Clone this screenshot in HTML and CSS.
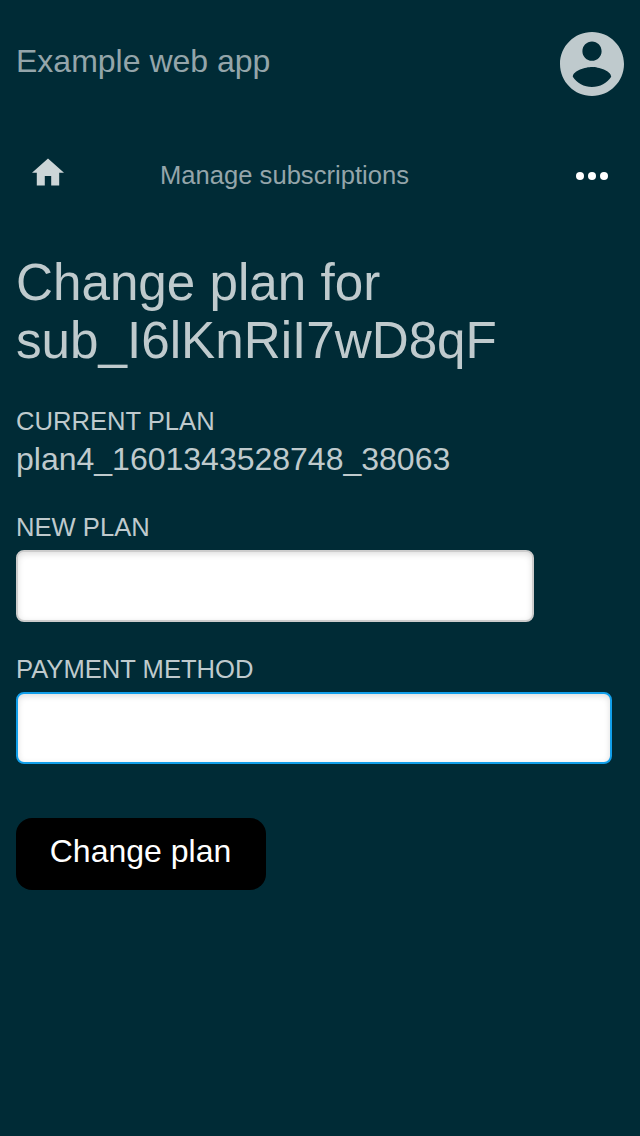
FILE: index.html
```html
<!DOCTYPE html>
<html lang="en">
<head>
<meta charset="utf-8">
<title>Change plan</title>
<link rel="stylesheet" href="styles.css">
</head>
<body>
<header class="header">
  <div class="app-name">Example web app</div>
  <svg class="account" viewBox="2 2 20 20"><path fill="currentColor" d="M12 2C6.48 2 2 6.48 2 12s4.48 10 10 10 10-4.48 10-10S17.52 2 12 2zm0 3c1.66 0 3 1.34 3 3s-1.34 3-3 3-3-1.34-3-3 1.34-3 3-3zm0 14.2c-2.5 0-4.71-1.28-6-3.22.03-1.99 4-3.08 6-3.08 1.99 0 5.97 1.09 6 3.08-1.29 1.94-3.5 3.22-6 3.22z"/></svg>
</header>
<nav class="nav">
  <svg class="home" viewBox="2 2.75 20 17.5"><path fill="currentColor" d="M10 20v-6h4v6h5v-8h3L12 3 2 12h3v8z"/></svg>
  <span class="nav-title">Manage subscriptions</span>
  <svg class="more" viewBox="0 0 32 8"><circle cx="4" cy="4" r="4"/><circle cx="16" cy="4" r="4"/><circle cx="28" cy="4" r="4"/></svg>
</nav>
<main class="main">
  <h1 class="title">Change plan for sub_I6lKnRiI7wD8qF</h1>
  <div class="label">CURRENT PLAN</div>
  <div class="value">plan4_1601343528748_38063</div>
  <label class="label" for="plan">NEW PLAN</label>
  <input class="field field-plan" id="plan">
  <label class="label" for="payment">PAYMENT METHOD</label>
  <input class="field field-payment" id="payment">
  <button class="submit">Change plan</button>
</main>
</body>
</html>
```
FILE: styles.css
```css
* { box-sizing: border-box; }
body { margin: 0; min-height: 1136px; background: #002b36; color: #bfcacd; font-family: "Liberation Sans", Arial, sans-serif; font-size: 32px; }
.header { display: flex; justify-content: space-between; height: 128px; padding: 32px 16px 0; }
.app-name { line-height: 36px; margin-top: 11px; color: #94a5aa; }
.account { width: 64px; height: 64px; }
.nav { display: flex; height: 96px; padding: 0 32px; align-items: center; }
.home { width: 32px; height: 28px; margin-top: -8px; color: #ccd5d7; }
.nav-title { flex: 1; margin: -2px 0 0 96px; font-size: 25.6px; line-height: 30px; color: #94a5aa; }
.more { width: 32px; height: 8px; fill: #fff; }
.main { display: flex; flex-direction: column; align-items: flex-start; padding: 30px 16px 0; }
.title { margin: 0 0 36px; width: 500px; font-size: 51.2px; line-height: 58px; font-weight: 400; }
.label { font-size: 25.6px; line-height: 30px; }
.value { line-height: 36px; margin: 5px 0 35px; }
.field { height: 72px; margin: 8px 0 32px; border: 2px solid #ccc; border-radius: 8px; background: #fff; box-shadow: inset 0 2px 6px #ddd; outline: none; }
.field-plan { width: 518px; }
.field-payment { width: 596px; border-color: #129fea; margin-bottom: 54px; }
.submit { width: 250px; height: 72px; padding: 0 1px 5px 0; border: 0; border-radius: 16px; background: #000; color: #fff; font: inherit; }
```
